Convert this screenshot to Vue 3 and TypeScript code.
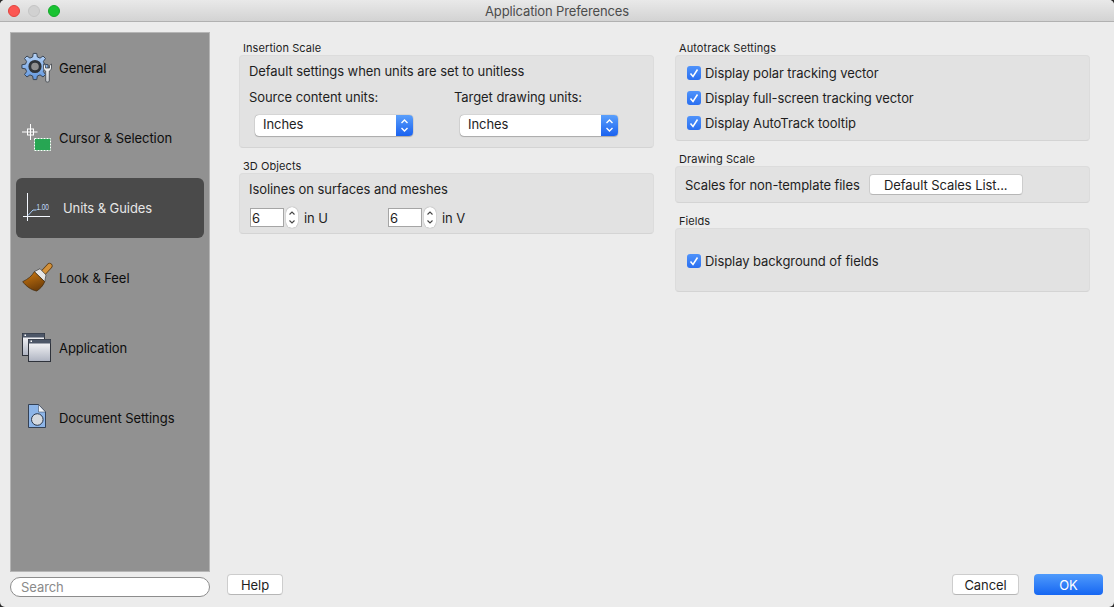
<script setup lang="ts">
const checks1 = ['Display polar tracking vector', 'Display full-screen tracking vector', 'Display AutoTrack tooltip']

function makeGear(cx: number, cy: number, outer: number, inner: number, teeth: number): string {
  const pts: string[] = []
  const step = (Math.PI * 2) / teeth
  for (let i = 0; i < teeth; i++) {
    const a = i * step - Math.PI / 2
    const angles: [number, number][] = [
      [a - step * 0.31, inner],
      [a - step * 0.17, outer],
      [a + step * 0.17, outer],
      [a + step * 0.31, inner],
    ]
    for (const [t, r] of angles) {
      pts.push(`${(cx + Math.cos(t) * r).toFixed(2)} ${(cy + Math.sin(t) * r).toFixed(2)}`)
    }
  }
  return `M${pts.join('L')}Z`
}
const gearPath = makeGear(14, 14.5, 13.2, 9.8, 8)
</script>

<template>
  <div class="window">
    <header class="titlebar">
      <span class="light red"></span>
      <span class="light grey"></span>
      <span class="light green"></span>
      <span class="wintitle">Application Preferences</span>
    </header>
    <div class="body">
      <aside class="side">
        <nav class="nav">
          <div class="item">
            <svg class="ico" viewBox="0 0 32 32" width="32" height="32">
              <defs>
                <linearGradient id="gearG" x1="0" y1="0" x2="0" y2="1"><stop offset="0" stop-color="#b9d5f8"/><stop offset="1" stop-color="#5f95de"/></linearGradient>
                <linearGradient id="wrG" x1="0" y1="0" x2="0" y2="1"><stop offset="0" stop-color="#fff"/><stop offset="1" stop-color="#c3c7cc"/></linearGradient>
              </defs>
              <path :d="gearPath" fill="url(#gearG)" stroke="#3a4656" stroke-width="1" stroke-linejoin="round"/>
              <circle cx="14" cy="14.5" r="5.200" fill="#8f8f8f" stroke="#2f343a" stroke-width="2.800"/>
              <path d="M22.500 12v4c0 1.500 1 2.500 2.200 3v10c0 1.500 3.600 1.500 3.600 0V19c1.200-.5 2.200-1.500 2.200-3v-4l-2 1.500V16h-4v-2.500z" fill="url(#wrG)" stroke="#3f444a" stroke-width=".8" stroke-linejoin="round"/>
            </svg>
            <span class="lbl">General</span>
          </div>
          <div class="item">
            <svg class="ico" viewBox="0 0 32 32" width="32" height="32">
              <rect x="13.500" y="16.500" width="16" height="12" fill="#27a653" stroke="#fff" stroke-width="1" stroke-dasharray="2 1"/>
              <path d="M1 10h15.500M9.500 2v16" stroke="#fff" stroke-width="1" fill="none"/>
              <rect x="6.500" y="7" width="6" height="6" fill="none" stroke="#fff" stroke-width="1"/>
            </svg>
            <span class="lbl">Cursor &amp; Selection</span>
          </div>
          <div class="item active">
            <svg class="ico ico-u" viewBox="0 0 32 32" width="32" height="32">
              <path d="M4.500 1v28M0 24.500h27" stroke="#f4f8ff" stroke-width="1" fill="none"/>
              <path d="M5 23.500l5-5.500h3.500" stroke="#a9cdf8" stroke-width="1" fill="none"/>
              <text x="13.500" y="18" class="unit-num" textLength="12.300" lengthAdjust="spacingAndGlyphs">1.00</text>
            </svg>
            <span class="lbl">Units &amp; Guides</span>
          </div>
          <div class="item">
            <svg class="ico" viewBox="0 0 32 32" width="32" height="32">
              <defs>
                <linearGradient id="brG" x1="0.200" y1="0" x2="0.600" y2="1"><stop offset="0" stop-color="#c9760f"/><stop offset="1" stop-color="#6b3b08"/></linearGradient>
              </defs>
              <path d="M28.500 4L22 11" stroke="#5c3a10" stroke-width="6" stroke-linecap="round" fill="none"/>
              <path d="M28.500 4L22 11" stroke="#d3913a" stroke-width="4.600" stroke-linecap="round" fill="none"/>
              <path d="M13.300 9.700L19 6.700 25 13 23.700 19.700z" fill="#e6e6e6" stroke="#3f3f3f" stroke-width=".7" stroke-linejoin="round"/>
              <path d="M13.300 9.700C11 14 7 17 1.700 19.700 5 24 10 28 15.700 29 19 27 22 24 23.700 19.700z" fill="url(#brG)" stroke="#3e2608" stroke-width=".7" stroke-linejoin="round"/>
            </svg>
            <span class="lbl">Look &amp; Feel</span>
          </div>
          <div class="item">
            <svg class="ico" viewBox="0 0 32 32" width="32" height="32">
              <defs>
                <linearGradient id="winG" x1="0" y1="0" x2="0" y2="1"><stop offset="0" stop-color="#fff"/><stop offset="1" stop-color="#aeb3c1"/></linearGradient>
              </defs>
              <rect x="1.500" y="1.500" width="22" height="22" fill="url(#winG)" stroke="#2e323a"/>
              <rect x="1.500" y="1.500" width="22" height="4" fill="#4d5768"/>
              <rect x="7.500" y="7.500" width="22" height="22" fill="url(#winG)" stroke="#2e323a"/>
              <rect x="7.500" y="7.500" width="22" height="4" fill="#4d5768"/>
              <rect x="9.500" y="8.500" width="1.500" height="1.500" fill="#fff"/>
              <rect x="3.500" y="2.500" width="1.500" height="1.500" fill="#fff"/>
            </svg>
            <span class="lbl">Application</span>
          </div>
          <div class="item">
            <svg class="ico" viewBox="0 0 32 32" width="32" height="32">
              <path d="M7.500 2.500H17.500L24.500 10V25.500H7.500z" fill="#8db5e8" stroke="#29364a" stroke-width=".9" stroke-linejoin="round"/>
              <path d="M17.500 2.500L24.500 10H17.500z" fill="#eef3fa" stroke="#29364a" stroke-width=".5"/>
              <circle cx="16.300" cy="17.500" r="5.800" fill="#d5d9de" stroke="#29364a" stroke-width="1"/>
            </svg>
            <span class="lbl">Document Settings</span>
          </div>
        </nav>
        <div class="search">Search</div>
      </aside>
      <main class="main">
        <div class="cols">
          <div class="col">
            <section class="group">
              <h3>Insertion Scale</h3>
              <div class="panel p-ins">
                <div class="txt">Default settings when units are set to unitless</div>
                <div class="selects">
                  <div class="selcol">
                    <div class="txt">Source content units:</div>
                    <div class="select"><span>Inches</span><i class="selbtn"><svg viewBox="0 0 17 21" width="17" height="21"><path d="M5.500 8l3-3 3 3M5.500 13l3 3 3-3" fill="none" stroke="#fff" stroke-width="1.400"/></svg></i></div>
                  </div>
                  <div class="selcol">
                    <div class="txt">Target drawing units:</div>
                    <div class="select"><span>Inches</span><i class="selbtn"><svg viewBox="0 0 17 21" width="17" height="21"><path d="M5.500 8l3-3 3 3M5.500 13l3 3 3-3" fill="none" stroke="#fff" stroke-width="1.400"/></svg></i></div>
                  </div>
                </div>
              </div>
            </section>
            <section class="group">
              <h3>3D Objects</h3>
              <div class="panel p-3d">
                <div class="txt">Isolines on surfaces and meshes</div>
                <div class="spins">
                  <div class="spin" v-for="a in ['in U', 'in V']" :key="a">
                    <span class="num">6</span>
                    <span class="stepper"><svg viewBox="0 0 12 21" width="12" height="21"><path d="M3.500 7.500l2.500-2.500 2.500 2.500M3.500 13.500l2.500 2.500 2.500-2.500" fill="none" stroke="#444" stroke-width="1.100"/></svg></span>
                    <span class="txt">{{ a }}</span>
                  </div>
                </div>
              </div>
            </section>
          </div>
          <div class="col">
            <section class="group">
              <h3>Autotrack Settings</h3>
              <div class="panel p-auto">
                <label class="chk" v-for="c in checks1" :key="c">
                  <span class="box"><svg viewBox="0 0 14 14" width="14" height="14"><path d="M3.500 7.500l2.500 3 4.500-7" fill="none" stroke="#fff" stroke-width="1.500"/></svg></span>
                  <span class="txt">{{ c }}</span>
                </label>
              </div>
            </section>
            <section class="group">
              <h3>Drawing Scale</h3>
              <div class="panel p-draw">
                <span class="txt">Scales for non-template files</span>
                <button class="btn wide">Default Scales List...</button>
              </div>
            </section>
            <section class="group">
              <h3>Fields</h3>
              <div class="panel p-fields">
                <label class="chk">
                  <span class="box"><svg viewBox="0 0 14 14" width="14" height="14"><path d="M3.500 7.500l2.500 3 4.500-7" fill="none" stroke="#fff" stroke-width="1.500"/></svg></span>
                  <span class="txt">Display background of fields</span>
                </label>
              </div>
            </section>
          </div>
        </div>
        <footer class="foot">
          <button class="btn help">Help</button>
          <div class="foot-r">
            <button class="btn cancel">Cancel</button>
            <button class="btn ok">OK</button>
          </div>
        </footer>
      </main>
    </div>
  </div>
</template>

<style>
html, body { margin: 0; background: #2a2a2a; }
</style>

<style scoped>
.window {
  width: 1114px; height: 607px; background: #ececec; border-radius: 5px; overflow: hidden;
  display: flex; flex-direction: column; box-sizing: border-box;
  font-family: Inter, "Liberation Sans", sans-serif; font-size: 13px; color: #1e1e1e; letter-spacing: -0.07px;
}
.titlebar {
  height: 21px; flex: none; display: flex; align-items: center; position: relative;
  background: linear-gradient(#e9e9e9, #d3d3d3); border-bottom: 1px solid #b1b1b1; box-sizing: content-box; padding-left: 8px; gap: 8px;
}
.light { width: 12px; height: 12px; border-radius: 50%; box-sizing: border-box; margin-top: 1px; }
.red { background: #fc5753; border: 1px solid #e0443e; }
.grey { background: #d1d1d1; border: 1px solid #c4c4c4; }
.green { background: #19c332; border: 1px solid #13a829; }
.wintitle { position: absolute; left: 0; right: 0; text-align: center; color: #4c4c4c; font-size: 13px; line-height: 22px; letter-spacing: -0.13px; }
.body { flex: 1; display: flex; min-height: 0; }
.side { width: 200px; margin-left: 10px; margin-top: 10px; flex: none; display: flex; flex-direction: column; }
.nav {
  height: 540px; background: #919191; border: 1px solid #b5b5b5; box-sizing: border-box;
  padding: 5px; display: flex; flex-direction: column; gap: 10px;
}
.item { height: 60px; flex: none; display: flex; align-items: center; padding-left: 5px; border-radius: 6px; color: #0d0d0d; }
.ico { flex: none; margin-right: 6px; }
.item.active { background: #4a4a4a; color: #e6e6e6; padding-left: 7px; }
.ico-u { margin-right: 8px; }
.unit-num { font-size: 9px; fill: #c4defd; font-family: "Liberation Sans", sans-serif; }
.search {
  height: 20px; margin-top: 5px; border: 1px solid #8d8d8d; border-radius: 10px; background: #fff; box-sizing: border-box;
  padding-left: 10px; line-height: 19px; color: #8a8a8a;
}
.main { flex: 1; display: flex; flex-direction: column; padding: 0 11px 0 16px; min-width: 0; }
.cols { flex: 1; display: flex; padding-left: 13px; padding-right: 13px; gap: 21px; padding-top: 19px; }
.col { width: 415px; flex: none; }
.group h3 { margin: 0; font-weight: 400; font-size: 11px; line-height: 14px; padding-left: 4px; color: #1e1e1e; letter-spacing: 0.08px; }
.panel {
  background: #e2e2e2; border: 1px solid #dcdcdc; border-bottom-color: #d4d4d4; border-radius: 4px; box-sizing: border-box; margin-bottom: 11px;
}
.p-ins { height: 93px; padding: 7px 9px 0; }
.p-3d { height: 61px; padding: 7px 9px 0; }
.txt { line-height: 16px; white-space: nowrap; }
.selects { display: flex; margin-top: 10px; }
.selcol { width: 205px; flex: none; }
.select {
  width: 158px; height: 21px; margin: 10px 0 0 6px; background: #fff; border-radius: 4px; position: relative; box-sizing: border-box;
  box-shadow: 0 0 1px rgba(0,0,0,.55), 0 1px 1px rgba(0,0,0,.2); padding-left: 8px; line-height: 19px;
}
.selbtn { position: absolute; right: 0; top: 0; width: 17px; height: 21px; background: linear-gradient(#5a9ffb, #1a62f0); border-radius: 0 4px 4px 0; display: flex; }
.spins { display: flex; margin-top: 10px; }
.spin { width: 138px; display: flex; align-items: center; height: 21px; margin-left: 1px; }
.spin + .spin { margin-left: 0; }
.num { width: 34px; height: 19px; background: #fff; border: 1px solid #a5a5a5; box-sizing: border-box; line-height: 19px; padding-left: 1px; }
.stepper { width: 12px; height: 21px; background: #fff; border-radius: 6px; margin-left: 2px; box-shadow: 0 0 1px rgba(0,0,0,.5); display: flex; }
.spin .txt { margin-left: 6px; }
.p-auto { height: 86px; padding: 9px 11px 0; display: flex; flex-direction: column; gap: 9px; }
.chk { display: flex; align-items: center; height: 16px; gap: 4px; }
.box { width: 14px; height: 14px; background: linear-gradient(#4f93fb, #2a6ff0); border-radius: 3px; flex: none; display: flex; }
.p-draw { height: 37px; display: flex; align-items: center; padding-left: 9px; gap: 9px; }
.p-fields { height: 64px; padding: 24px 11px 0; }
.btn {
  font: inherit; letter-spacing: inherit; color: #1e1e1e; background: #fff; border: 1px solid #cdcdcd; border-bottom-color: #b6b6b6; border-radius: 4px; height: 21px; padding: 0; box-sizing: border-box;
}
.wide { width: 154px; }
.foot { height: 33px; flex: none; display: flex; justify-content: space-between; box-sizing: border-box; }
.help { width: 56px; margin-left: 1px; }
.foot-r { display: flex; gap: 15px; }
.cancel { width: 67px; }
.ok { width: 69px; background: linear-gradient(#4f9bfc, #1666f2); border: none; color: #fff; }
</style>
